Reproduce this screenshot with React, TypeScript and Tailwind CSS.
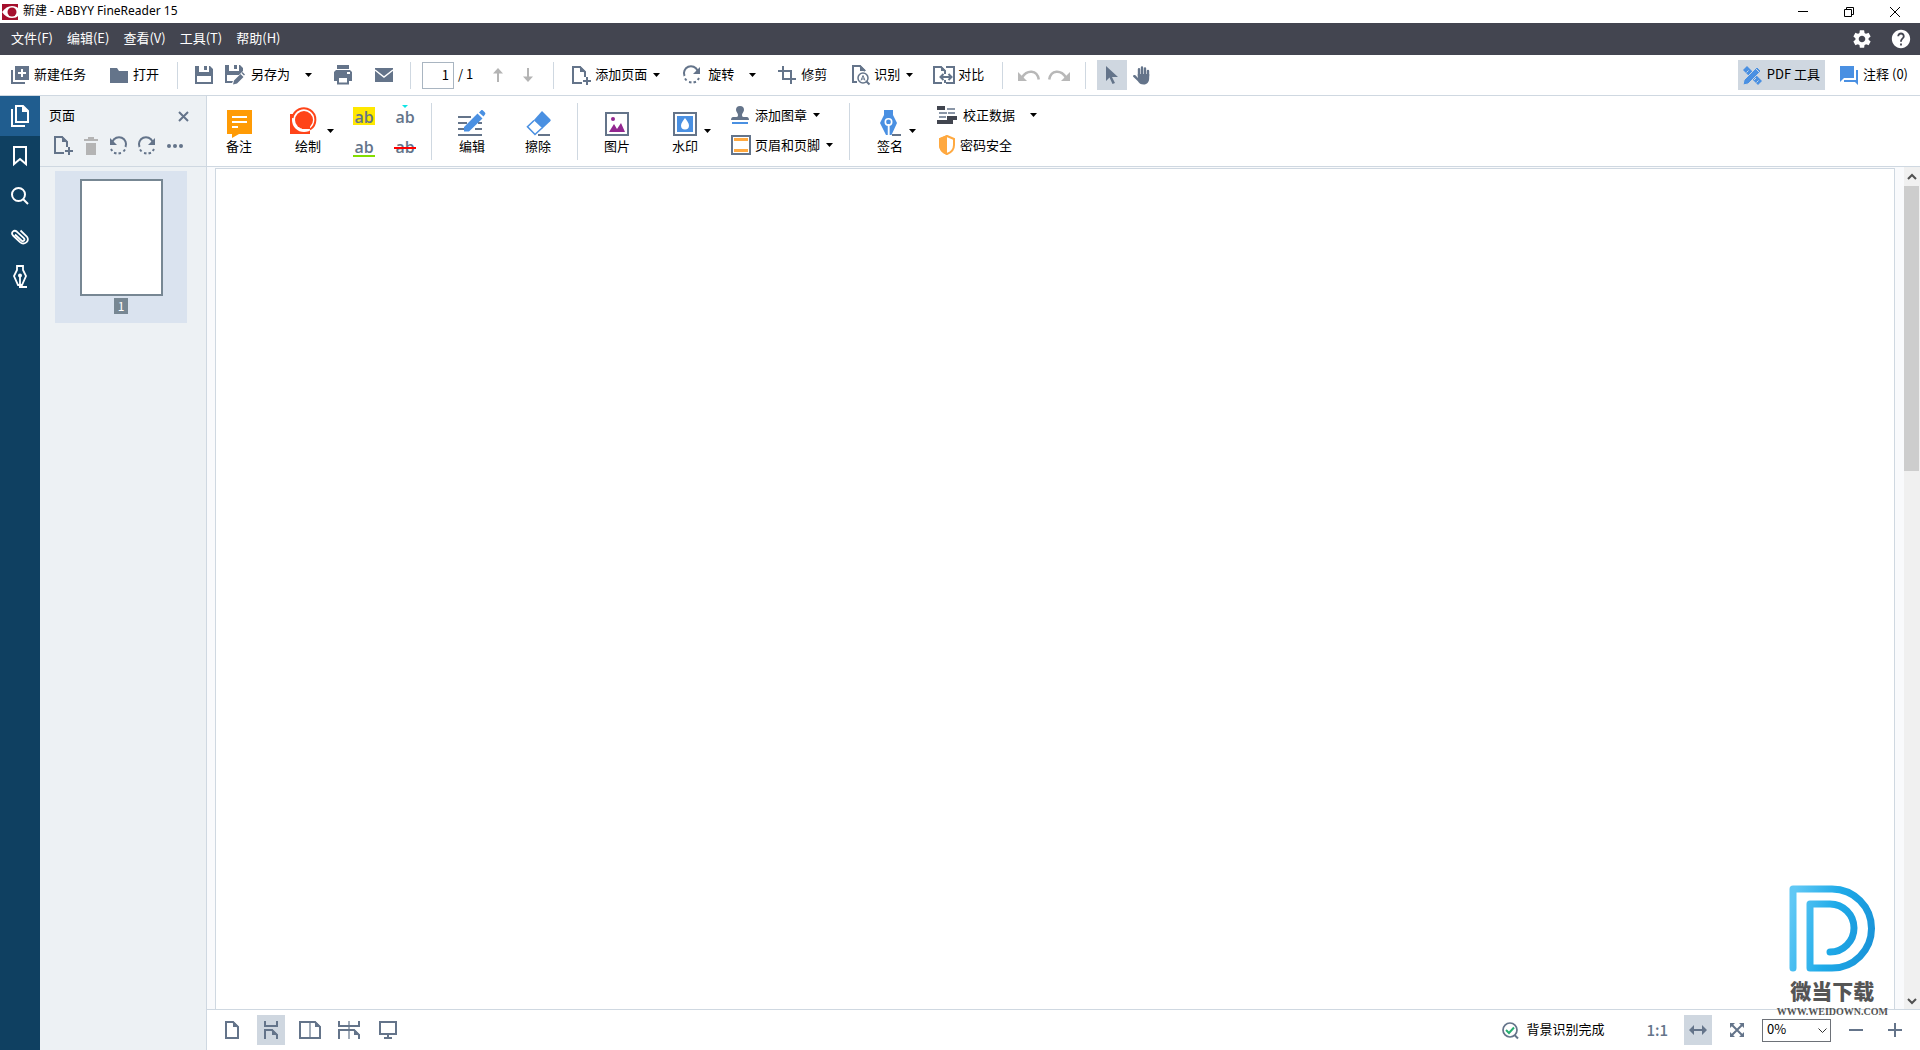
import { useState } from "react";
import type { ReactNode } from "react";
import { MdHelp, MdSettings } from "react-icons/md";

const slate = "#64748a";
const blue = "#4a90e2";

type IconProps = { w: number; h: number; children: ReactNode };

function Icon({ w, h, children }: IconProps) {
    return (
        <svg className="block shrink-0 overflow-visible" width={w} height={h} viewBox={`0 0 ${w} ${h}`} fill="none" aria-hidden="true">
            {children}
        </svg>
    );
}

function Caret() {
    return (
        <Icon w={7} h={4}>
            <path d="M0 0h7L3.500 4z" fill="#000" />
        </Icon>
    );
}

function Label({ children }: { children: ReactNode }) {
    return <span className="pb-0.5">{children}</span>;
}

function Sep() {
    return <div className="w-px h-[27px] bg-[#cfd8e1] shrink-0" />;
}

function RibbonSep() {
    return <div className="w-px h-[57px] mt-[7px] bg-[#cfd8e1] shrink-0" />;
}

function AppLogo() {
    return (
        <Icon w={16} h={16}>
            <rect width="16" height="16" fill="#a50f2d" />
            <path d="M0 8C3 4 6 2 10 2c3 0 5 1 6 2v8c-1 1-3 2-6 2-4 0-7-2-10-6z" fill="#fff" />
            <circle cx="10" cy="8" r="4.500" fill="#a50f2d" />
        </Icon>
    );
}

function NewTaskIcon() {
    return (
        <Icon w={18} h={18}>
            <path d="M1 4v13h13" stroke={slate} strokeWidth="2" />
            <path d="M4 0h14v14H4z" fill={slate} />
            <path d="M11 3v8M7 7h8" stroke="#fff" strokeWidth="2" />
        </Icon>
    );
}

function FolderIcon() {
    return (
        <Icon w={18} h={16}>
            <path d="M0 1h7l2 3h9v12H0z" fill={slate} />
        </Icon>
    );
}

function SaveIcon() {
    return (
        <Icon w={18} h={18}>
            <path d="M0 0h4v6h10V0h1l3 3v15H0zM2 10v6h14v-6z" fill={slate} fillRule="evenodd" />
            <path d="M9 0h3v4H9z" fill={slate} />
        </Icon>
    );
}

function SaveAsIcon() {
    return (
        <Icon w={20} h={20}>
            <path d="M0 0h4v6h10V0h1l3 3v3l-4 4H2v6h6l-1 2H0z" fill={slate} />
            <path d="M9 0h3v4H9z" fill={slate} />
            <path d="M8 19.500l1-4 6.500-6.500 3 3-6.500 6.500zM16.500 8l1-1 2.500 2.500-1 1z" fill={slate} />
        </Icon>
    );
}

function PrintIcon() {
    return (
        <Icon w={18} h={20}>
            <path d="M3 0h12v4H3z" fill={slate} />
            <path d="M2 5h14l2 2v9h-3v-5H3v5H0V7z" fill={slate} />
            <path d="M4 12h10v6.500H4z" stroke={slate} strokeWidth="2" />
            <path d="M13 7h3v2h-3z" fill="#fff" />
        </Icon>
    );
}

function MailIcon() {
    return (
        <Icon w={18} h={14}>
            <path d="M0 0h18v14H0z" fill={slate} />
            <path d="M0 2l9 7 9-7" stroke="#fff" strokeWidth="1.500" />
        </Icon>
    );
}

function UpIcon() {
    return (
        <Icon w={10} h={14}>
            <path d="M5 2v12" stroke="#b4b4b4" strokeWidth="2" />
            <path d="M5 0l5 5.500H0z" fill="#b4b4b4" />
        </Icon>
    );
}

function DownIcon() {
    return (
        <Icon w={10} h={14}>
            <path d="M5 0v12" stroke="#b4b4b4" strokeWidth="2" />
            <path d="M5 14l5-5.500H0z" fill="#b4b4b4" />
        </Icon>
    );
}

function AddPageIcon() {
    return (
        <Icon w={19} h={19}>
            <path d="M10 17H1V1h7l5 5v5" stroke={slate} strokeWidth="2" />
            <path d="M8 0v6h6z" fill={slate} />
            <path d="M15 11v8M11 15h8" stroke={slate} strokeWidth="2" />
        </Icon>
    );
}

function RotateIcon({ left }: { left?: boolean }) {
    return (
        <Icon w={18} h={18}>
            <g transform={left ? "matrix(-1 0 0 1 18 0)" : undefined}>
                <path d="M1.500 10A7 7 0 0 1 14.500 4.500" stroke={slate} strokeWidth="2" />
                <path d="M17 1v7h-7z" fill={slate} />
                <path d="M2 12.500l1.500 2M6 16l2.500 .5M10.500 16.500l2.500-.8M14.800 14l1.200-2" stroke={slate} strokeWidth="2" />
            </g>
        </Icon>
    );
}

function CropIcon() {
    return (
        <Icon w={18} h={18}>
            <path d="M0 5h13v13M5 0v13h13" stroke={slate} strokeWidth="2" />
        </Icon>
    );
}

function RecognizeIcon() {
    return (
        <Icon w={18} h={20}>
            <path d="M5 17H1V1h7l5 5" stroke={slate} strokeWidth="2" />
            <path d="M8 0v6h6z" fill={slate} />
            <circle cx="11" cy="13" r="5" stroke={slate} strokeWidth="1.500" />
            <path d="M9 15.500l2-5 2 5M9.700 14h2.600" stroke={slate} />
            <path d="M14.500 16.500l3 3" stroke={slate} strokeWidth="2" />
        </Icon>
    );
}

function CompareIcon() {
    return (
        <Icon w={22} h={18}>
            <path d="M9 17H1V1h7l4 4v3M12 14v3M13 17h8V1h-8" stroke={slate} strokeWidth="2" />
            <path d="M8 0v5h5z" fill={slate} />
            <path d="M8 11h10M10.500 8l-3 3 3 3M15.500 8l3 3-3 3" stroke={slate} strokeWidth="2" />
        </Icon>
    );
}

function UndoIcon({ redo }: { redo?: boolean }) {
    return (
        <Icon w={22} h={11}>
            <g transform={redo ? "matrix(-1 0 0 1 22 0)" : undefined}>
                <path d="M4 7.500C9-.5 19-.5 20.800 9.500" stroke="#b8b8b8" strokeWidth="2.500" />
                <path d="M0 2v9h9z" fill="#b8b8b8" />
            </g>
        </Icon>
    );
}

function PointerIcon() {
    return (
        <Icon w={12} h={18}>
            <path d="M0 0v15l3.500-3.500L6.500 18l2.500-1-3-6h6z" fill={slate} />
        </Icon>
    );
}

function HandIcon() {
    return (
        <Icon w={17} h={19}>
            <path d="M6 10V3.200M9 9V1.500M12 10V2.500M15 10V5" stroke={slate} strokeWidth="2.400" strokeLinecap="round" />
            <path d="M4.800 8h11.400v4c0 4-2 6.500-5.500 6.500-3 0-4.500-1-6-3.500L0 10.500c0-1.500 2-1.800 3-.8L4.800 12z" fill={slate} />
        </Icon>
    );
}

function PdfToolsIcon() {
    return (
        <Icon w={19} h={19}>
            <path d="M0 4l4-4 15 15-4 4z" fill={blue} />
            <path d="M3.500 6.500l2-2M6 9l2-2M11 14l2-2M13.500 16.500l2-2" stroke="#cfd7e0" strokeWidth="1" />
            <path d="M0 19l1-5L14 1l4 4L5 18z" fill={blue} stroke="#cfd7e0" strokeWidth="1" />
            <path d="M12.500 2.500l4 4" stroke="#cfd7e0" />
        </Icon>
    );
}

function CommentsIcon() {
    return (
        <Icon w={18} h={19}>
            <path d="M0 0h14v12H4l-4 4z" fill={blue} />
            <path d="M16 4h2v15l-3-3H4v-2h12z" fill={blue} />
        </Icon>
    );
}

function NoteIcon() {
    return (
        <Icon w={25} h={26}>
            <path d="M0 0h25v24H12l-7 4v-4H0z" fill="#ff9b05" />
            <path d="M5 7h15M5 12h15M5 17h6" stroke="#fff" strokeWidth="2" />
        </Icon>
    );
}

function DrawIcon() {
    return (
        <Icon w={26} h={28}>
            <path d="M0 6h20v20H0z" fill="#ff4419" />
            <circle cx="14" cy="12" r="12" fill="#fff" />
            <path d="M2.500 10A11.500 11.500 0 1 1 20 21.500" stroke="#ff4419" strokeWidth="2" />
            <circle cx="14" cy="12" r="9" fill="#ff4419" />
            <path d="M12 6h8v15h-8z" fill="#ff4419" />
        </Icon>
    );
}

function EditIcon() {
    return (
        <Icon w={28} h={26}>
            <path d="M0 7h13M0 13h9M0 19h6M17 19h7M20 13h4M0 25h24" stroke={slate} strokeWidth="2" />
            <path d="M6 17L19.500 3.500l5 5L11 21.500H6zM21 2.500l2-2c1-1 2 0 3 1s2 2 1 3l-1.500 2z" fill={blue} />
        </Icon>
    );
}

function EraserIcon() {
    return (
        <Icon w={25} h={25}>
            <path d="M16 0l8 8c1 1 1 1.500 0 2.500l-8 7.500L7.500 9.500z" fill={blue} />
            <path d="M8 9.500l-6.500 6.300 7.500 7.700 7-6.500" fill="#fff" stroke={blue} strokeWidth="1.600" />
            <path d="M12 24h12" stroke={slate} strokeWidth="2" />
        </Icon>
    );
}

function PictureIcon() {
    return (
        <Icon w={24} h={24}>
            <path d="M1 1h22v22H1z" fill="#fff" stroke={slate} strokeWidth="2" />
            <circle cx="8" cy="7" r="2" fill="#922790" />
            <path d="M4 20l5-8 3 5 4-6 4 9z" fill="#922790" />
        </Icon>
    );
}

function WatermarkIcon() {
    return (
        <Icon w={24} h={24}>
            <path d="M1 1h22v22H1z" fill="#fff" stroke={slate} strokeWidth="2" />
            <path d="M4 4h16v16H4z" fill={blue} />
            <path d="M12 6c2 3 4 5 4 7.500a4 4 0 0 1-8 0C8 11 10 9 12 6z" fill="#fff" />
        </Icon>
    );
}

function StampIcon() {
    return (
        <Icon w={18} h={18}>
            <path d="M9 0a4 4 0 0 1 4 4c0 2-2 3-2 5 0 2 1 2 3 2h2c1 0 2 1 2 3H0c0-2 1-3 2-3h2c2 0 3 0 3-2 0-2-2-3-2-5a4 4 0 0 1 4-4z" fill={slate} />
            <path d="M1 17h16" stroke={blue} strokeWidth="2" />
        </Icon>
    );
}

function HeaderFooterIcon() {
    return (
        <Icon w={20} h={20}>
            <path d="M1 1h18v18H1z" fill="#fff" stroke={slate} strokeWidth="2" />
            <path d="M3 4.500h14M3 15.500h14" stroke="#ffa940" strokeWidth="3" />
        </Icon>
    );
}

function SignIcon() {
    return (
        <Icon w={21} h={26}>
            <path d="M4 0h9v5l4 8-5.500 12h-2V13h-1.500v12L6 25 0 13l4-8z" fill={blue} />
            <circle cx="8.500" cy="12" r="3.200" fill={blue} stroke="#fff" strokeWidth="1.600" />
            <path d="M8.500 14v12" stroke="#fff" strokeWidth="1.500" />
            <path d="M12 25h9" stroke={slate} strokeWidth="2" />
        </Icon>
    );
}

function RedactIcon() {
    return (
        <Icon w={20} h={18}>
            <path d="M0 0h8v4H0zM10 10h10v4h-4v4H0v-4h10z" fill="#41454f" />
            <path d="M10 3h8M2 7h8M11 7h7M2 11h7" stroke={slate} strokeWidth="1.500" />
        </Icon>
    );
}

function ShieldIcon() {
    return (
        <Icon w={16} h={20}>
            <path d="M8 1l7 3v6c0 4-3 7.500-7 9-4-1.500-7-5-7-9V4z" fill="#fff" stroke="#ffa940" strokeWidth="2" />
            <path d="M8 0L0 3.500V10c0 4.500 3.500 8.500 8 10z" fill="#ffa940" />
        </Icon>
    );
}

function TrashIcon() {
    return (
        <Icon w={14} h={18}>
            <path d="M0 2h4V0h6v2h4v2H0zM2 6h10v12H2z" fill="#b4b4b4" />
        </Icon>
    );
}

function CheckIcon() {
    return (
        <Icon w={17} h={17}>
            <circle cx="8" cy="8" r="7" stroke={slate} strokeWidth="1.700" />
            <path d="M12.500 13l3.500 3.500" stroke={slate} strokeWidth="2" />
            <path d="M4 8l3 3 5-5.500" stroke="#27ae71" strokeWidth="2" />
        </Icon>
    );
}

const railItems = [
    {
        label: "页面",
        icon: (
            <Icon w={18} h={22}>
                <path d="M5 1h7l5 5v11H5z" stroke="#fff" strokeWidth="2" />
                <path d="M11 0v7h7z" fill="#fff" />
                <path d="M1 4v17h13" stroke="#fff" strokeWidth="2" />
            </Icon>
        ),
    },
    {
        label: "书签",
        icon: (
            <Icon w={14} h={20}>
                <path d="M1 1h12v17l-6-5-6 5z" stroke="#fff" strokeWidth="2" />
            </Icon>
        ),
    },
    {
        label: "搜索",
        icon: (
            <Icon w={18} h={18}>
                <circle cx="7.500" cy="7.500" r="6.500" stroke="#fff" strokeWidth="2" />
                <path d="M12 12l5 5" stroke="#fff" strokeWidth="2" />
            </Icon>
        ),
    },
    {
        label: "附件",
        icon: (
            <Icon w={19} h={17}>
                <path d="M4 6.500l6.500 6c1.800 1.500 4-.5 2.300-2.300L6 3.800C3 1.200-.8 4.500 2 7.500l7 6.600c4 3.600 10.500-1 6.800-5.600L9.500 2.500" stroke="#fff" strokeWidth="1.800" />
            </Icon>
        ),
    },
    {
        label: "签名",
        icon: (
            <Icon w={14} h={23}>
                <path d="M4 1h6v4l3 6-4 9H5L1 11l3-6z" stroke="#fff" strokeWidth="1.800" />
                <circle cx="7" cy="10.500" r="2" fill="#fff" />
                <path d="M7 11v11M6 22h8" stroke="#fff" strokeWidth="1.800" />
            </Icon>
        ),
    },
];

const viewItems = [
    {
        label: "单页",
        icon: (
            <Icon w={14} h={18}>
                <path d="M1 1h7l5 5v11H1z" stroke={slate} strokeWidth="2" />
                <path d="M8 0v6h6z" fill={slate} />
            </Icon>
        ),
    },
    {
        label: "连续单页",
        icon: (
            <Icon w={14} h={18}>
                <path d="M1 0v5h12V0M1 18V9h7l5 5v4" stroke={slate} strokeWidth="2" />
                <path d="M8 8v6h6z" fill={slate} />
            </Icon>
        ),
    },
    {
        label: "双页",
        icon: (
            <Icon w={22} h={18}>
                <path d="M1 1h15l5 5v11H1z" stroke={slate} strokeWidth="2" />
                <path d="M16 0v6h6z" fill={slate} />
                <path d="M11 1v16" stroke={slate} strokeOpacity="0.6" strokeWidth="2" />
            </Icon>
        ),
    },
    {
        label: "连续双页",
        icon: (
            <Icon w={22} h={18}>
                <path d="M1 0v5h20V0M1 18V9h15l5 5v4" stroke={slate} strokeWidth="2" />
                <path d="M16 8v6h6z" fill={slate} />
                <path d="M11 0v18" stroke={slate} strokeOpacity="0.6" strokeWidth="2" />
            </Icon>
        ),
    },
    {
        label: "全屏",
        icon: (
            <Icon w={18} h={18}>
                <path d="M1 1h16v12H1z" stroke={slate} strokeWidth="2" />
                <path d="M9 13v4M5 17h8" stroke={slate} strokeWidth="2" />
            </Icon>
        ),
    },
];

function TitleBar() {
    return (
        <div className="h-[23px] flex items-center bg-white pl-0.5">
            <AppLogo />
            <h1 className="ml-[5px] pb-0.5 text-xs font-normal font-['Noto_Sans','Noto_Sans_CJK_SC',sans-serif]">新建 - ABBYY FineReader 15</h1>
            <div className="ml-auto flex items-center gap-9 pr-5">
                <button aria-label="最小化">
                    <Icon w={10} h={10}><path d="M0 4.500h10" stroke="#000" /></Icon>
                </button>
                <button aria-label="还原">
                    <Icon w={10} h={10}><path d="M.5 2.500h7v7h-7zM2.500 2.500v-2h7v7h-2" stroke="#000" /></Icon>
                </button>
                <button aria-label="关闭">
                    <Icon w={10} h={10}><path d="M0 0l10 10M10 0L0 10" stroke="#000" /></Icon>
                </button>
            </div>
        </div>
    );
}

function MenuBar() {
    const menus = ["文件(F)", "编辑(E)", "查看(V)", "工具(T)", "帮助(H)"];
    return (
        <nav className="h-8 flex items-center bg-[#434550] text-white pl-[11px] pr-2">
            <div className="flex gap-3.5 pb-0.5">
                {menus.map((m) => (
                    <button key={m}>{m}</button>
                ))}
            </div>
            <div className="ml-auto flex gap-[17px]">
                <button aria-label="设置"><MdSettings size={22} /></button>
                <button aria-label="帮助"><MdHelp size={22} /></button>
            </div>
        </nav>
    );
}

function Toolbar() {
    const [page, setPage] = useState("1");
    return (
        <div className="h-[41px] flex items-center border-b border-[#cfd8e1] bg-white pl-[11px] pr-3 whitespace-nowrap">
            <button className="flex items-center gap-[5px]"><NewTaskIcon /><Label>新建任务</Label></button>
            <button className="ml-6 flex items-center gap-[5px]"><FolderIcon /><Label>打开</Label></button>
            <div className="ml-[18px]"><Sep /></div>
            <button className="ml-[17px]" aria-label="保存"><SaveIcon /></button>
            <button className="ml-3 flex items-center gap-1.5"><SaveAsIcon /><Label>另存为</Label></button>
            <button className="ml-[15px]" aria-label="另存为选项"><Caret /></button>
            <button className="ml-[22px]" aria-label="打印"><PrintIcon /></button>
            <button className="ml-[23px]" aria-label="邮件"><MailIcon /></button>
            <div className="ml-[17px]"><Sep /></div>
            <label className="ml-[11px] flex items-center gap-1">
                <input
                    className="w-8 h-[27px] border border-[#a9b5c1] text-right pr-1 pb-0.5 outline-none"
                    aria-label="页码"
                    value={page}
                    onChange={(e) => setPage(e.target.value)}
                />
                <Label>/ 1</Label>
            </label>
            <button className="ml-5" aria-label="上一页"><UpIcon /></button>
            <button className="ml-5" aria-label="下一页"><DownIcon /></button>
            <div className="ml-5"><Sep /></div>
            <button className="ml-[18px] flex items-center gap-1"><AddPageIcon /><Label>添加页面</Label><span className="ml-0.5"><Caret /></span></button>
            <button className="ml-[23px] flex items-center gap-[7px]"><RotateIcon /><Label>旋转</Label></button>
            <button className="ml-[15px]" aria-label="旋转选项"><Caret /></button>
            <button className="ml-[22px] flex items-center gap-[5px]"><CropIcon /><Label>修剪</Label></button>
            <button className="ml-[25px] flex items-center gap-1"><RecognizeIcon /><Label>识别</Label><span className="ml-0.5"><Caret /></span></button>
            <button className="ml-5 flex items-center gap-[3px]"><CompareIcon /><Label>对比</Label></button>
            <div className="ml-[18px]"><Sep /></div>
            <button className="ml-[15px]" aria-label="撤销"><UndoIcon /></button>
            <button className="ml-2" aria-label="重做"><UndoIcon redo /></button>
            <div className="ml-[15px]"><Sep /></div>
            <button className="ml-[11px] size-[30px] flex items-center justify-center bg-[#cfd7e0]" aria-label="选择"><PointerIcon /></button>
            <button className="ml-1.5" aria-label="手形"><HandIcon /></button>
            <button className="ml-auto h-[30px] px-[5px] flex items-center gap-[5px] bg-[#cfd7e0]"><PdfToolsIcon /><Label>PDF 工具</Label></button>
            <button className="ml-[15px] flex items-center gap-[5px]"><CommentsIcon /><Label>注释 (0)</Label></button>
        </div>
    );
}

function BigTool({ icon, label, caret }: { icon: ReactNode; label: string; caret?: boolean }) {
    return (
        <button className="flex h-[70px] items-center shrink-0">
            <span className="w-[26px] flex flex-col items-center pt-0.5">
                <span className="h-7 flex items-end">{icon}</span>
                <span className="leading-5">{label}</span>
            </span>
            {caret && <span className="ml-1.5"><Caret /></span>}
        </button>
    );
}

function Ribbon() {
    return (
        <div className="h-[71px] flex items-start border-b border-[#cfd8e1] bg-white whitespace-nowrap">
            <div className="ml-[19px]"><BigTool icon={<NoteIcon />} label="备注" /></div>
            <div className="ml-[43px]"><BigTool icon={<span className="mr-2.5"><DrawIcon /></span>} label="绘制" caret /></div>
            <div className="ml-[19px] mt-[11px] grid grid-cols-2 gap-x-[19px] gap-y-3.5 text-[#64748a] font-['Open_Sans',sans-serif] text-base font-semibold">
                <button className="w-[22px] h-[18px] leading-5 bg-[#ffe800]">ab</button>
                <button className="relative w-[22px] h-[18px] leading-5">
                    ab
                    <span className="absolute -top-0.5 left-2">
                        <Icon w={6} h={3}><path d="M0 0h6L3 3z" fill="#0ee5e5" /></Icon>
                    </span>
                </button>
                <button className="w-[22px] h-[18px] leading-4 border-b-2 border-[#84de00]">ab</button>
                <button className="relative w-[22px] h-[18px] leading-4 pb-0.5">
                    ab
                    <span className="absolute left-0 top-2 w-[22px] h-0.5 bg-[#ff0000]" />
                </button>
            </div>
            <div className="ml-[15px]"><RibbonSep /></div>
            <div className="ml-[27px]"><BigTool icon={<EditIcon />} label="编辑" /></div>
            <div className="ml-10"><BigTool icon={<EraserIcon />} label="擦除" /></div>
            <div className="ml-[26px]"><RibbonSep /></div>
            <div className="ml-[26px]"><BigTool icon={<PictureIcon />} label="图片" /></div>
            <div className="ml-[42px]"><BigTool icon={<WatermarkIcon />} label="水印" caret /></div>
            <div className="ml-5 mt-[9px] flex flex-col items-start gap-2.5">
                <button className="h-5 flex items-center gap-1"><span className="w-5"><StampIcon /></span>添加图章<span className="ml-0.5"><Caret /></span></button>
                <button className="h-5 flex items-center gap-1"><HeaderFooterIcon />页眉和页脚<span className="ml-0.5"><Caret /></span></button>
            </div>
            <div className="ml-4"><RibbonSep /></div>
            <div className="ml-[27px]"><BigTool icon={<SignIcon />} label="签名" caret /></div>
            <div className="ml-[21px] mt-[9px] flex flex-col items-start gap-2.5">
                <button className="h-5 flex items-center gap-1.5"><RedactIcon />校正数据<span className="ml-[9px]"><Caret /></span></button>
                <button className="h-5 flex items-center gap-[5px]"><span className="pl-0.5"><ShieldIcon /></span>密码安全</button>
            </div>
        </div>
    );
}

function PagesPanel() {
    return (
        <aside className="w-[167px] shrink-0 flex flex-col bg-[#edf1f4] border-r border-[#cfd8e1]">
            <div className="h-[71px] border-b border-[#cfd8e1]">
                <div className="h-10 flex items-center justify-between pl-[9px] pr-[17px]">
                    <h2 className="pb-0.5">页面</h2>
                    <button aria-label="关闭面板">
                        <Icon w={11} h={11}><path d="M1 1l9 9M10 1l-9 9" stroke={slate} strokeWidth="2" /></Icon>
                    </button>
                </div>
                <div className="flex items-center pl-3.5 gap-[11px]">
                    <button aria-label="添加页面"><AddPageIcon /></button>
                    <button aria-label="删除"><TrashIcon /></button>
                    <button aria-label="向左旋转"><RotateIcon left /></button>
                    <button aria-label="向右旋转"><RotateIcon /></button>
                    <button aria-label="更多">
                        <Icon w={16} h={4}>
                            <circle cx="2" cy="2" r="2" fill={slate} />
                            <circle cx="8" cy="2" r="2" fill={slate} />
                            <circle cx="14" cy="2" r="2" fill={slate} />
                        </Icon>
                    </button>
                </div>
            </div>
            <button className="ml-[15px] mt-1 w-[132px] h-[152px] pt-2 flex flex-col items-center gap-0.5 bg-[#dae3ef]">
                <span className="w-[83px] h-[117px] bg-white border-2 border-[#778793]" />
                <span className="w-3.5 h-4 leading-4 bg-[#778793] text-white text-xs">1</span>
            </button>
        </aside>
    );
}

function ScrollBar() {
    return (
        <div className="w-4 flex flex-col bg-[#f0f0f0]">
            <button className="h-[19px] flex items-center justify-center" aria-label="向上滚动">
                <Icon w={8} h={6}><path d="M0 5l4-4 4 4" stroke="#505050" strokeWidth="2" /></Icon>
            </button>
            <div className="flex-1 pr-px">
                <div className="h-[285px] bg-[#cdcdcd]" />
            </div>
            <button className="h-4 flex items-center justify-center" aria-label="向下滚动">
                <Icon w={8} h={6}><path d="M0 1l4 4 4-4" stroke="#505050" strokeWidth="2" /></Icon>
            </button>
        </div>
    );
}

function StatusBar() {
    const [zoom, setZoom] = useState("0%");
    return (
        <footer className="h-[41px] flex items-center border-t border-[#cfd8e1] bg-white pl-[11px] pr-[18px]">
            <div className="flex items-center gap-[11px]">
                {viewItems.map((v, i) => (
                    <button
                        key={v.label}
                        aria-label={v.label}
                        className={"h-[30px] w-7 flex items-center justify-center " + (i === 1 ? "bg-[#cfd7e0]" : "")}
                    >
                        {v.icon}
                    </button>
                ))}
            </div>
            <div className="ml-auto flex items-center">
                <CheckIcon />
                <span className="ml-[7px] pb-0.5">背景识别完成</span>
                <button className="ml-[42px] text-[15px] font-medium text-[#64748a]">1:1</button>
                <button className="ml-4 w-7 h-[30px] flex items-center justify-center bg-[#cfd7e0]" aria-label="适合宽度">
                    <Icon w={18} h={10}>
                        <path d="M3 5h12" stroke={slate} strokeWidth="2" />
                        <path d="M0 5l5-5v10zM18 5l-5-5v10z" fill={slate} />
                    </Icon>
                </button>
                <button className="ml-[18px]" aria-label="适合窗口">
                    <Icon w={14} h={14}>
                        <path d="M1 1l12 12M13 1L1 13" stroke={slate} strokeWidth="2" />
                        <path d="M0 0h5L0 5zM14 0v5L9 0zM0 14V9l5 5zM14 14H9l5-5z" fill={slate} />
                    </Icon>
                </button>
                <div className="relative ml-[18px]">
                    <select
                        className="appearance-none w-[69px] h-[23px] pl-1 pb-0.5 leading-4 border border-[#6d7178] bg-white block"
                        aria-label="缩放"
                        value={zoom}
                        onChange={(e) => setZoom(e.target.value)}
                    >
                        <option>0%</option>
                        <option>50%</option>
                        <option>100%</option>
                    </select>
                    <span className="absolute right-1 top-[9px] pointer-events-none">
                        <Icon w={9} h={6}><path d="M.5 .5l4 4 4-4" stroke="#333" /></Icon>
                    </span>
                </div>
                <button className="ml-[18px]" aria-label="缩小">
                    <Icon w={14} h={14}><path d="M0 7h14" stroke={slate} strokeWidth="2" /></Icon>
                </button>
                <button className="ml-[25px]" aria-label="放大">
                    <Icon w={14} h={14}><path d="M0 7h14M7 0v14" stroke={slate} strokeWidth="2" /></Icon>
                </button>
            </div>
        </footer>
    );
}

function SiteMark() {
    return (
        <div className="absolute right-8 bottom-[30px] flex flex-col items-center pointer-events-none text-[#555]">
            <svg width="87" height="87" viewBox="0 0 87 87" fill="none" aria-hidden="true">
                <defs>
                    <linearGradient id="mark" gradientUnits="userSpaceOnUse" x1="0" y1="30" x2="87" y2="50">
                        <stop offset="0" stopColor="#60c8f5" />
                        <stop offset="0.5" stopColor="#1eaae8" />
                        <stop offset="1" stopColor="#1a93d8" />
                    </linearGradient>
                </defs>
                <path
                    d="M4 83V4h39a39.500 39.500 0 0 1 0 79H21V19h20a24 24 0 0 1 0 48"
                    stroke="url(#mark)"
                    strokeWidth="7"
                    strokeLinecap="round"
                    strokeLinejoin="round"
                />
            </svg>
            <span className="mt-1 text-[21px] leading-7 font-black">微当下载</span>
            <span className="font-['Liberation_Serif',serif] font-bold text-[10px] leading-4">WWW.WEIDOWN.COM</span>
        </div>
    );
}

export default function App() {
    return (
        <div className="relative h-screen flex flex-col overflow-hidden bg-white text-black text-[13px] leading-5 font-['Noto_Sans_CJK_SC',sans-serif]">
            <TitleBar />
            <MenuBar />
            <Toolbar />
            <div className="flex-1 min-h-0 flex">
                <nav className="w-10 shrink-0 bg-[#0f4061]">
                    {railItems.map((r, i) => (
                        <button
                            key={r.label}
                            aria-label={r.label}
                            className={"size-10 flex items-center justify-center " + (i === 0 ? "bg-[#205d8f]" : "")}
                        >
                            {r.icon}
                        </button>
                    ))}
                </nav>
                <PagesPanel />
                <div className="flex-1 min-w-0 flex flex-col">
                    <Ribbon />
                    <div className="flex-1 min-h-0 flex bg-[#f9fafc]">
                        <main className="flex-1 ml-2 mr-[9px] mt-px bg-white border border-b-0 border-[#cfd8e1]" />
                        <ScrollBar />
                    </div>
                    <StatusBar />
                </div>
            </div>
            <SiteMark />
        </div>
    );
}
